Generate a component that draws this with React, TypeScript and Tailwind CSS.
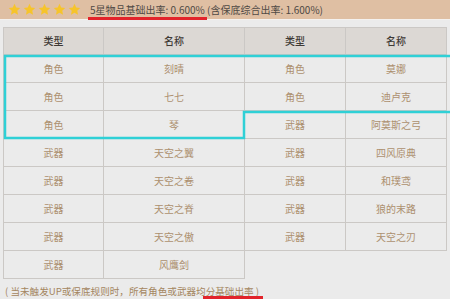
import React from "react"

const cjk = { fontFamily: '"Noto Sans CJK SC", "Noto Sans", sans-serif' }

const left = [
  ["角色", "刻晴"],
  ["角色", "七七"],
  ["角色", "琴"],
  ["武器", "天空之翼"],
  ["武器", "天空之卷"],
  ["武器", "天空之脊"],
  ["武器", "天空之傲"],
  ["武器", "风鹰剑"],
]

const right = [
  ["角色", "莫娜"],
  ["角色", "迪卢克"],
  ["武器", "阿莫斯之弓"],
  ["武器", "四风原典"],
  ["武器", "和璞鸢"],
  ["武器", "狼的末路"],
  ["武器", "天空之刃"],
]

function Star() {
  return (
    <svg width="13" height="13" viewBox="0 0 24 24">
      <path
        d="M12 1.5l3.2 6.8 7.3.9-5.4 5.1 1.4 7.3L12 18l-6.5 3.6 1.4-7.3L1.5 9.2l7.3-.9z"
        fill="#f6c42b"
      />
    </svg>
  )
}

export default function App() {
  const cell = "border border-[#cbc8c5] text-center align-middle"
  return (
    <div className="relative w-[450px] h-[299px] overflow-hidden bg-[#ebebeb]" style={cjk}>
      <div className="h-[20px] bg-[#dfbfa3] flex items-center border-b border-[#f4f1ee]">
        <div className="flex items-center gap-[2px] pl-[8px]">
          <Star />
          <Star />
          <Star />
          <Star />
          <Star />
        </div>
        <span className="ml-[9px] text-[10px] text-[#4f4a45] leading-none">
          5星物品基础出率: 0.600% (含保底综合出率: 1.600%)
        </span>
      </div>
      <div className="absolute left-[88px] top-[17px] w-[119px] h-[3px] bg-[#e2242b]" />

      <table className="ml-[3px] mt-[7px] border-collapse text-[10px] leading-none table-fixed w-[443px]">
        <colgroup>
          <col className="w-[100px]" />
          <col className="w-[141px]" />
          <col className="w-[101px]" />
          <col className="w-[101px]" />
        </colgroup>
        <thead>
          <tr className="h-[27px] bg-[#dcd8d4] text-[#3f3a36]">
            <th className={`${cell} font-medium`}>类型</th>
            <th className={`${cell} font-medium`}>名称</th>
            <th className={`${cell} font-medium`}>类型</th>
            <th className={`${cell} font-medium`}>名称</th>
          </tr>
        </thead>
        <tbody className="text-[#ad906f]">
          {left.map((l, i) => {
            const r = right[i]
            return (
              <tr key={i} className="h-[28px]">
                <td className={cell}>{l[0]}</td>
                <td className={cell}>{l[1]}</td>
                {r ? (
                  <>
                    <td className={cell}>{r[0]}</td>
                    <td className={cell}>{r[1]}</td>
                  </>
                ) : (
                  <td colSpan={2} className="border-l border-[#cbc8c5]" />
                )}
              </tr>
            )
          })}
        </tbody>
      </table>

      <p className="mt-[8px] pl-[5px] text-[9.6px] leading-none text-[#a4865f] whitespace-nowrap">
        ( 当未触发UP或保底规则时，所有角色或武器均分基础出率 )
      </p>
      <div className="absolute left-[203px] top-[296px] w-[60px] h-[4px] bg-[#e2242b]" />

      <svg className="absolute left-0 top-0 pointer-events-none" width="450" height="299">
        <polyline
          points="451,56 5,56 5,138 244,138 244,112 451,112"
          fill="none"
          stroke="#2fd0d6"
          strokeWidth="2.5"
        />
      </svg>
    </div>
  )
}
